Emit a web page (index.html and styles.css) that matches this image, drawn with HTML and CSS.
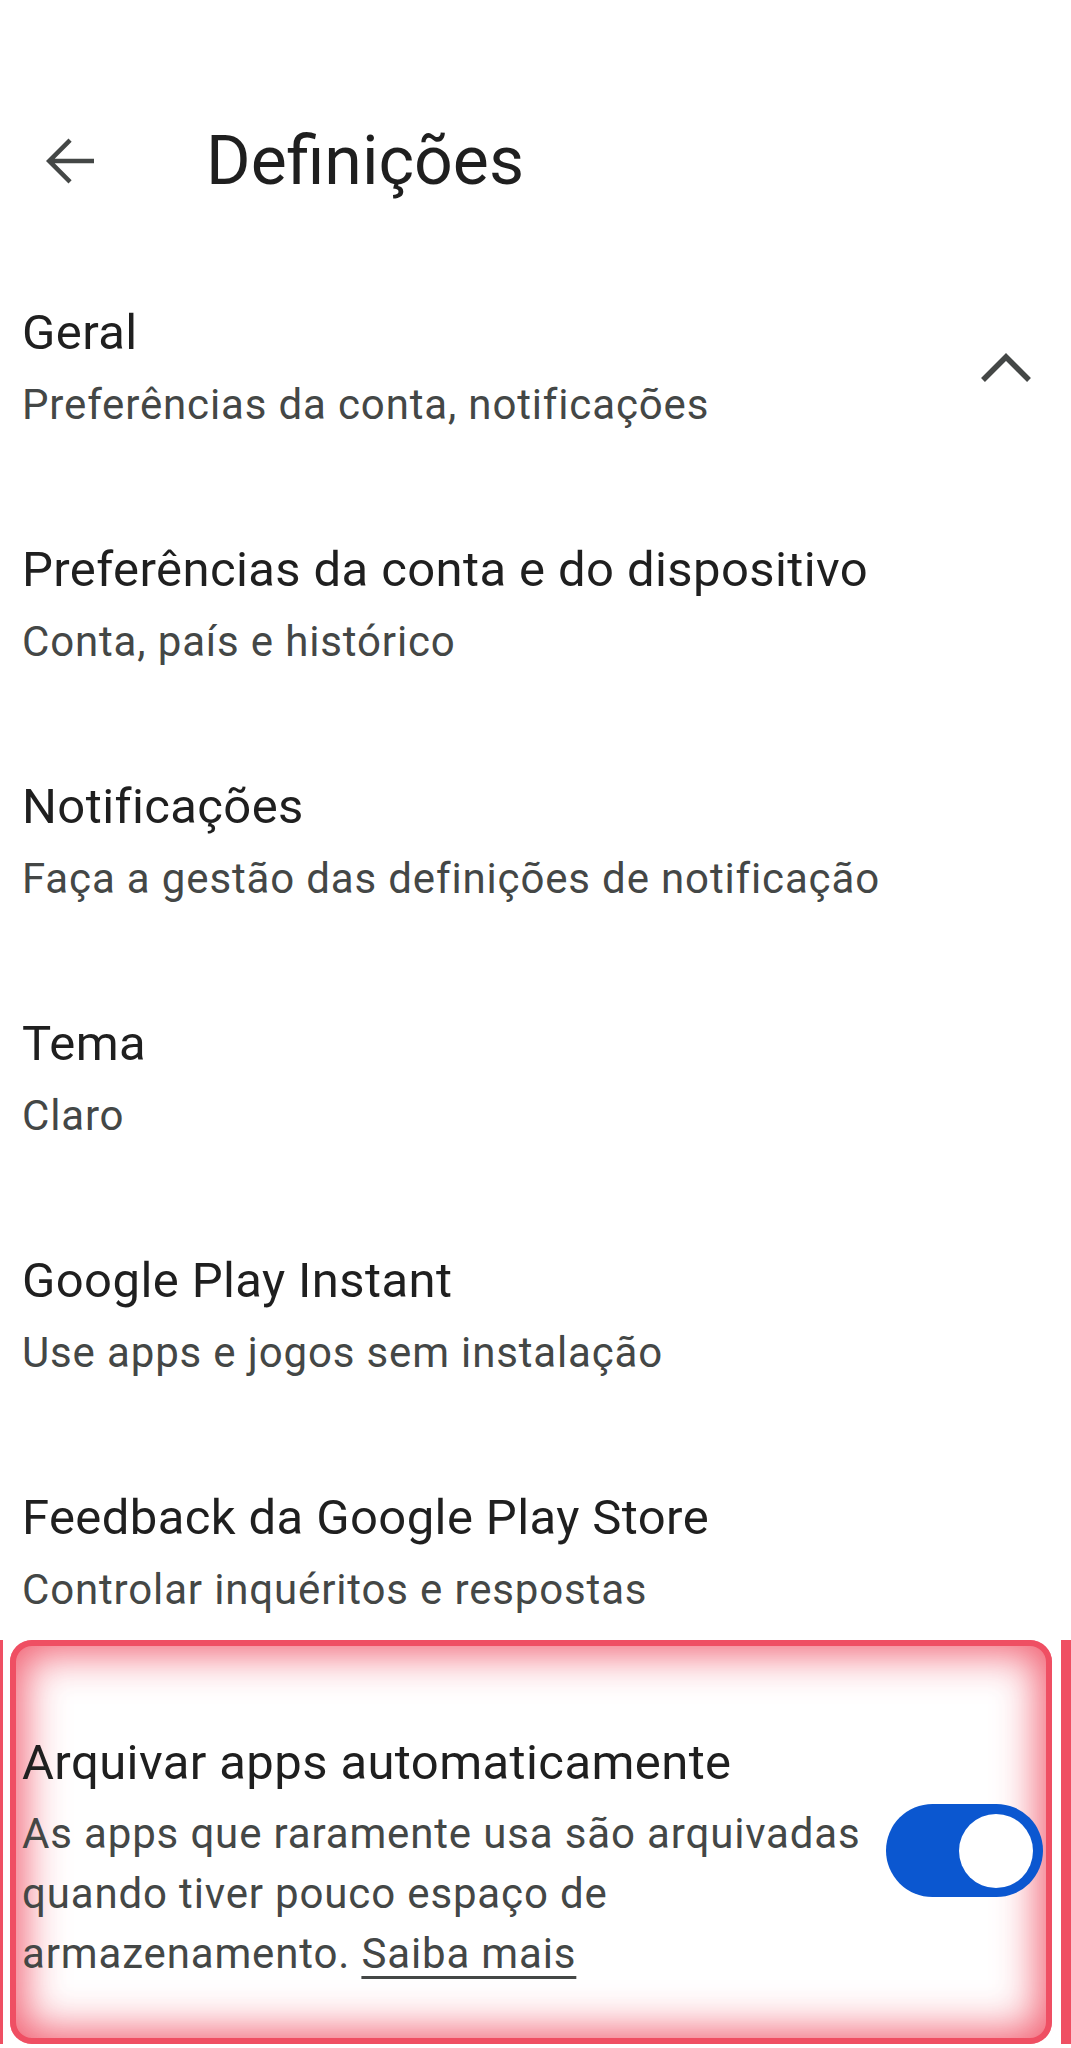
FILE: index.html
```html
<!DOCTYPE html>
<html lang="pt">
<head>
    <meta charset="UTF-8">
    <title>Definições</title>
    <link rel="stylesheet" href="styles.css">
</head>
<body>
    <div class="appbar">
        <button class="back" aria-label="Voltar">
            <svg width="72" height="72" viewBox="0 0 24 24">
                <path d="M20 11.25H6.9l5.65-5.65L11.5 4.5 4 12l7.5 7.5 1.05-1.1-5.65-5.65H20z" fill="#444746"/>
            </svg>
        </button>
        <h1>Definições</h1>
    </div>

    <div class="list">
        <div class="row">
            <div class="text">
                <div class="title">Geral</div>
                <div class="sub">Preferências da conta, notificações</div>
            </div>
            <svg class="chevron" width="52" height="30" viewBox="0 0 52 30">
                <path d="M3 27 L26 4 L49 27" fill="none" stroke="#444746" stroke-width="5.5"/>
            </svg>
        </div>
        <div class="row">
            <div class="text">
                <div class="title">Preferências da conta e do dispositivo</div>
                <div class="sub">Conta, país e histórico</div>
            </div>
        </div>
        <div class="row">
            <div class="text">
                <div class="title">Notificações</div>
                <div class="sub">Faça a gestão das definições de notificação</div>
            </div>
        </div>
        <div class="row">
            <div class="text">
                <div class="title">Tema</div>
                <div class="sub">Claro</div>
            </div>
        </div>
        <div class="row">
            <div class="text">
                <div class="title">Google Play Instant</div>
                <div class="sub">Use apps e jogos sem instalação</div>
            </div>
        </div>
        <div class="row">
            <div class="text">
                <div class="title">Feedback da Google Play Store</div>
                <div class="sub">Controlar inquéritos e respostas</div>
            </div>
        </div>

        <div class="highlight">
            <div class="highlight-inner">
                <div class="row last">
                    <div class="text">
                        <div class="title">Arquivar apps automaticamente</div>
                        <div class="sub">As apps que raramente usa são arquivadas quando tiver pouco espaço de armazenamento. <a href="#">Saiba mais</a></div>
                    </div>
                    <div class="switch">
                        <div class="thumb"></div>
                    </div>
                </div>
            </div>
        </div>
    </div>
</body>
</html>
```

FILE: styles.css
```css
body {
    margin: 0;
    background: #fff;
    font-family: Roboto, "Noto Sans", Arial, sans-serif;
    color: #1f1f1f;
}
.appbar {
    display: flex;
    align-items: center;
    height: 120px;
    margin-top: 101px;
}
.back {
    border: none;
    background: none;
    padding: 0;
    margin-left: 34px;
    width: 72px;
    height: 72px;
    display: flex;
}
.appbar h1 {
    margin: 0 0 0 100px;
    font-size: 68px;
    font-weight: 400;
    color: #1f1f1f;
}
.list {
    padding-top: 28px;
}
.row {
    display: flex;
    align-items: center;
    padding: 55px 39px 55px 22px;
}
.text {
    flex: 1;
}
.title {
    font-size: 49px;
    line-height: 58px;
    letter-spacing: 0.4px;
    color: #1f1f1f;
}
.sub {
    font-size: 42px;
    line-height: 52px;
    letter-spacing: 0.85px;
    margin-top: 17px;
    color: #444746;
}
.chevron {
    flex: none;
}
.highlight {
    margin-top: -31px;
    border-left: 3px solid #ef4f63;
    border-right: 10px solid #ef4f63;
    padding: 0 9px 0 7px;
}
.highlight-inner {
    height: 404px;
    box-sizing: border-box;
    padding-top: 94px;
    border-radius: 22px;
    box-shadow: inset 0 0 0 6px #ef4f63, inset 0 0 42px 14px rgba(239, 79, 99, 0.9);
}
.row.last {
    align-items: flex-start;
    padding: 0 9px 0 12px;
}
.row.last .sub {
    line-height: 60px;
    margin-top: 12px;
}
.sub a {
    color: #444746;
    text-decoration: underline;
    text-decoration-thickness: 3px;
    text-underline-offset: 8px;
}
.switch {
    flex: none;
    width: 157px;
    height: 93px;
    margin-top: 70px;
    border-radius: 47px;
    background: #0b57d0;
    display: flex;
    align-items: center;
    justify-content: flex-end;
    padding-right: 10px;
    box-sizing: border-box;
}
.thumb {
    width: 74px;
    height: 74px;
    border-radius: 50%;
    background: #fff;
}
```
